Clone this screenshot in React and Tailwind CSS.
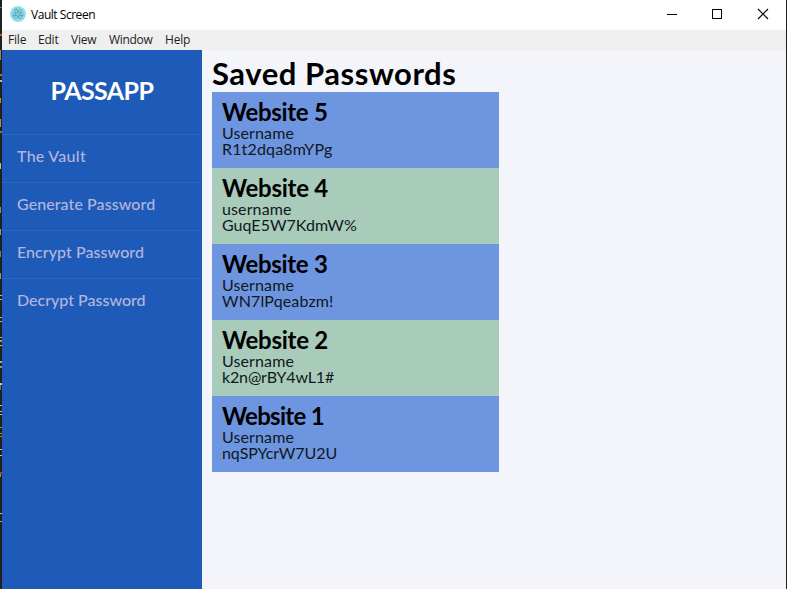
const entries = [
  { title: "Website 5", user: "Username", pass: "R1t2dqa8mYPg", titleClass: "tracking-[-0.3px]", passClass: "tracking-[0.15px]" },
  { title: "Website 4", user: "username", pass: "GuqE5W7KdmW%", titleClass: "tracking-[-0.25px]", passClass: "tracking-[0.02px]" },
  { title: "Website 3", user: "Username", pass: "WN7lPqeabzm!", titleClass: "tracking-[-0.3px]", passClass: "tracking-[0.15px]" },
  { title: "Website 2", user: "Username", pass: "k2n@rBY4wL1#", titleClass: "tracking-[-0.25px]", passClass: "tracking-[-0.15px]" },
  { title: "Website 1", user: "Username", pass: "nqSPYcrW7U2U", titleClass: "tracking-[-0.7px]", passClass: "tracking-[-0.08px]" },
];

const links = [
  { label: "The Vault", spacing: "tracking-[0.28px]" },
  { label: "Generate Password", spacing: "tracking-[0.08px]" },
  { label: "Encrypt Password", spacing: "tracking-[0.06px]" },
  { label: "Decrypt Password", spacing: "tracking-[0px]" },
];

// [y, height, colour] of the slivers visible along the left window edge
const slivers = [
  [7, 1, "#3f7f9a"], [34, 2, "#c0562b"], [50, 10, "#9a8465"], [74, 2, "#a9752b"], [80, 2, "#b5b5b5"],
  [98, 5, "#c98a1c"], [119, 8, "#b0906a"], [131, 2, "#777777"], [163, 6, "#b8c2bc"],
  [207, 6, "#5f9aa8"], [229, 6, "#7fa0a8"], [251, 6, "#5f7f98"], [273, 6, "#6fa0a8"],
  [295, 1, "#b5b5b5"], [299, 1, "#b5b5b5"], [317, 1, "#b5b5b5"], [321, 1, "#b5b5b5"],
  [337, 1, "#aaaaaa"], [340, 2, "#b08b70"], [345, 1, "#bbbbbb"], [361, 2, "#a8a8a8"], [366, 2, "#8b9a90"],
  [383, 2, "#c5c5c5"], [385, 5, "#4d7f99"], [405, 1, "#bbbbbb"], [411, 1, "#bbbbbb"], [414, 1, "#bbbbbb"],
  [427, 1, "#b58a1c"], [433, 1, "#b58a1c"], [436, 1, "#b58a1c"], [449, 1, "#bbbbbb"], [455, 1, "#bbbbbb"],
  [472, 2, "#b04020"], [474, 3, "#5fa0b0"], [513, 1, "#bbbbbb"], [521, 1, "#9a9ab0"],
];

function AppIcon() {
  return (
    <svg width="16" height="16" viewBox="0 0 16 16" fill="none">
      <circle cx="8" cy="8" r="8" fill="#9be3ee" />
      <circle cx="8" cy="8" r="7.2" fill="#8fdce8" />
      <g stroke="#559aa8" strokeWidth="0.6">
        <ellipse cx="8" cy="8" rx="5.3" ry="2" />
        <ellipse cx="8" cy="8" rx="5.3" ry="2" transform="rotate(60 8 8)" />
        <ellipse cx="8" cy="8" rx="5.3" ry="2" transform="rotate(120 8 8)" />
      </g>
      <g fill="#4a8c9a">
        <circle cx="8" cy="8" r="0.5" />
        <circle cx="3.4" cy="9.8" r="0.7" />
        <circle cx="12.5" cy="9.8" r="0.7" />
        <circle cx="6.2" cy="3.2" r="0.7" />
      </g>
    </svg>
  );
}

function TitleBar() {
  return (
    <header className="flex h-[30px] items-center bg-white pl-2 font-['Open_Sans',sans-serif] text-black">
      <div className="-mt-0.5"><AppIcon /></div>
      <span className="ml-[5px] text-[12px] leading-4 tracking-[-0.47px]">Vault Screen</span>
      <svg className="ml-auto" width="138" height="30" viewBox="0 0 138 30" fill="none" stroke="#000" shapeRendering="crispEdges">
        <path d="M19 14.5h10" />
        <rect x="64.5" y="9.5" width="9" height="9" />
        <path d="M110 9l10 10M120 9l-10 10" shapeRendering="auto" strokeWidth="1.1" />
      </svg>
    </header>
  );
}

function MenuBar() {
  return (
    <nav className="flex h-5 items-center bg-[#efefef] font-['Open_Sans',sans-serif] text-[12px] leading-5 text-[#222]">
      <span className="w-[30px] pl-1.5 tracking-[-0.2px]">File</span>
      <span className="w-[33px] pl-1.5 tracking-[-0.2px]">Edit</span>
      <span className="w-[38px] pl-1.5 tracking-[-0.2px]">View</span>
      <span className="w-14 pl-1.5 tracking-[-0.3px]">Window</span>
      <span className="pl-1.5 tracking-[-0.2px]">Help</span>
    </nav>
  );
}

export default function App() {
  return (
    <div className="flex h-[589px] w-[787px] overflow-hidden bg-[#202020]">
      <svg width="2" height="589" className="shrink-0" shapeRendering="crispEdges">
        {slivers.map(([y, h, c]) => (
          <rect key={y} x="0" y={y} width={h > 2 ? 1 : 2} height={h} fill={c} />
        ))}
      </svg>
      <div className="flex w-[784px] flex-col">
        <TitleBar />
        <MenuBar />
        <div className="flex flex-1 bg-[#f3f5fa] font-['Lato',sans-serif]">
          <aside className="w-[200px] bg-[#1e5bb8]">
            <h1 className="h-[84px] pt-6 text-center text-[25px] font-bold leading-[32px] tracking-[-0.6px] text-white">PASSAPP</h1>
            {links.map((l) => (
              <a key={l.label} className={`block h-12 border-t border-[#2d65bc] pt-[11px] pl-[15px] text-[16px] font-medium leading-5 text-[#b4b5de] ${l.spacing}`}>{l.label}</a>
            ))}
          </aside>
          <main className="pl-2.5">
            <h2 className="h-[42px] pt-[3px] text-[31px] font-bold leading-[40px] tracking-[0.55px] text-black">Saved Passwords</h2>
            <div>
              {entries.map((e) => (
                <section key={e.title} className="h-[76px] w-[287px] px-2.5 pt-[7px] odd:bg-[#6e95e0] even:bg-[#a9cbba]">
                  <h3 className={`h-[26px] text-[24px] font-bold leading-[25px] text-black ${e.titleClass}`}>{e.title}</h3>
                  <p className="text-[16px] leading-4 tracking-[0.12px] text-[#101820]">{e.user}</p>
                  <p className={`text-[16px] leading-4 text-[#101820] ${e.passClass}`}>{e.pass}</p>
                </section>
              ))}
            </div>
          </main>
        </div>
      </div>
    </div>
  );
}
